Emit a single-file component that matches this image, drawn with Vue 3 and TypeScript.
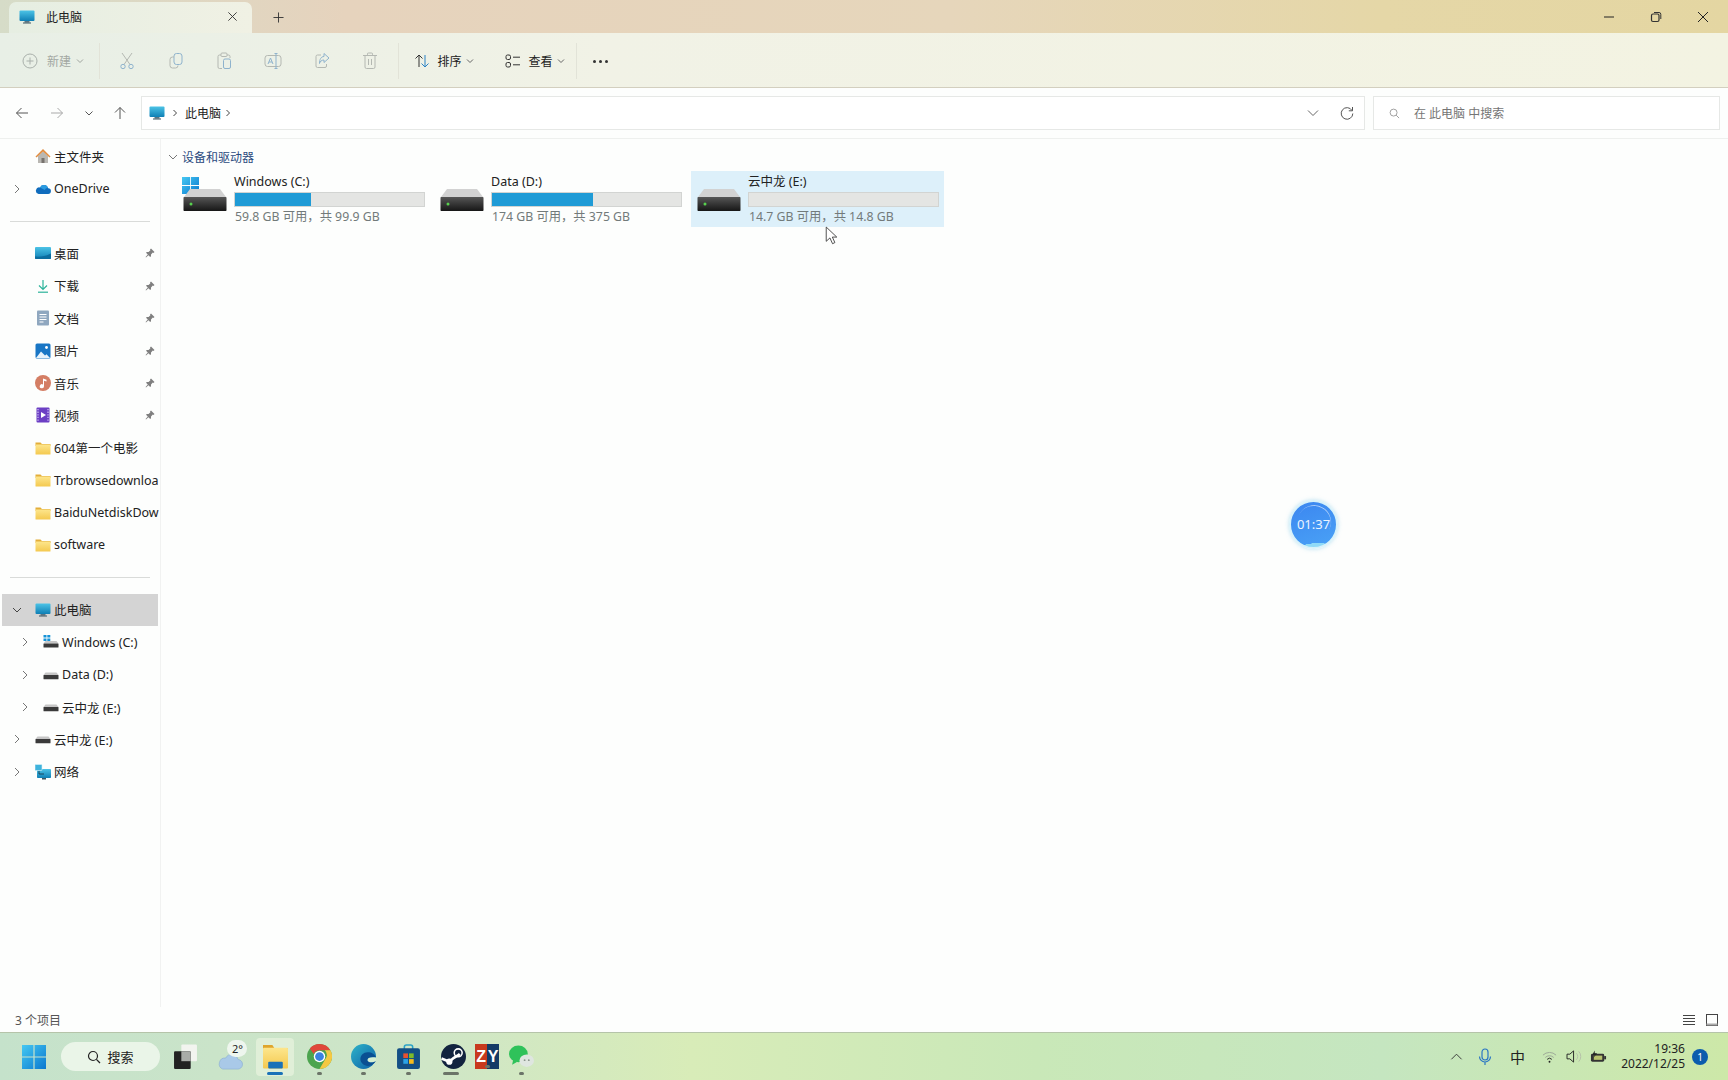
<script setup lang="ts">
interface NavItem {
  label: string;
  icon: string;
  arrow?: 'right' | 'down';
  pin?: boolean;
  sub?: boolean;
  active?: boolean;
}

const topItems: NavItem[] = [
  { label: '主文件夹', icon: 'home' },
  { label: 'OneDrive', icon: 'cloud', arrow: 'right' },
];

const quickItems: NavItem[] = [
  { label: '桌面', icon: 'desktop', pin: true },
  { label: '下载', icon: 'download', pin: true },
  { label: '文档', icon: 'doc', pin: true },
  { label: '图片', icon: 'picture', pin: true },
  { label: '音乐', icon: 'music', pin: true },
  { label: '视频', icon: 'video', pin: true },
  { label: '604第一个电影', icon: 'folder' },
  { label: 'Trbrowsedownloa', icon: 'folder' },
  { label: 'BaiduNetdiskDow', icon: 'folder' },
  { label: 'software', icon: 'folder' },
];

const pcItems: NavItem[] = [
  { label: '此电脑', icon: 'monitor', arrow: 'down', active: true },
  { label: 'Windows (C:)', icon: 'winsmall', arrow: 'right', sub: true },
  { label: 'Data (D:)', icon: 'drivesmall', arrow: 'right', sub: true },
  { label: '云中龙 (E:)', icon: 'drivesmall', arrow: 'right', sub: true },
  { label: '云中龙 (E:)', icon: 'drivesmall', arrow: 'right' },
  { label: '网络', icon: 'network', arrow: 'right' },
];

const navGroups = [topItems, quickItems, pcItems];

const drives = [
  { name: 'Windows (C:)', info: '59.8 GB 可用，共 99.9 GB', used: 40, system: true, selected: false },
  { name: 'Data (D:)', info: '174 GB 可用，共 375 GB', used: 53.6, system: false, selected: false },
  { name: '云中龙 (E:)', info: '14.7 GB 可用，共 14.8 GB', used: 0, system: false, selected: true },
];

const editTools = ['cut', 'copy', 'paste', 'rename', 'share', 'trash'];
const taskApps = ['chrome', 'edge', 'store', 'steam', 'zy', 'wechat'];
</script>

<template>
  <div class="screen">
    <svg class="sprite" width="0" height="0" aria-hidden="true">
      <defs>
        <linearGradient id="g-screen" x1="0" y1="0" x2="0" y2="1">
          <stop offset="0" stop-color="#4cc3e6" />
          <stop offset="1" stop-color="#0f7fb5" />
        </linearGradient>
        <linearGradient id="g-win" x1="0" y1="0" x2="1" y2="1">
          <stop offset="0" stop-color="#45c8f2" />
          <stop offset="1" stop-color="#0a78cf" />
        </linearGradient>
        <linearGradient id="g-drive" x1="0" y1="0" x2="0" y2="1">
          <stop offset="0" stop-color="#565656" />
          <stop offset="1" stop-color="#161616" />
        </linearGradient>
        <linearGradient id="g-folder" x1="0" y1="0" x2="0" y2="1">
          <stop offset="0" stop-color="#fde68d" />
          <stop offset="1" stop-color="#f4c94f" />
        </linearGradient>
        <linearGradient id="g-edge" x1="0" y1="0" x2="1" y2="1">
          <stop offset="0" stop-color="#2fb4c8" />
          <stop offset="1" stop-color="#0c5fa8" />
        </linearGradient>
      </defs>
      <symbol id="i-monitor" viewBox="0 0 16 16">
        <rect x="0.5" y="1.5" width="15" height="10.5" rx="1" fill="url(#g-screen)" />
        <rect x="5.5" y="12" width="5" height="1.6" fill="#5a7482" />
        <rect x="4" y="13.5" width="8" height="1" fill="#3d5560" />
      </symbol>
      <symbol id="i-home" viewBox="0 0 16 16">
        <path d="M3 8v7h10V8L8 3.5Z" fill="#b9b7b2" />
        <rect x="6.5" y="10" width="3" height="5" fill="#77736e" />
        <path d="M0.5 8.5 8 1l7.5 7.5-1 1L8 3.5 1.5 9.5Z" fill="#e08c3f" />
      </symbol>
      <symbol id="i-cloud" viewBox="0 0 16 16">
        <path d="M3.6 13h9.2a2.9 2.9 0 0 0 .4-5.8A4.4 4.4 0 0 0 5 6.4 3.3 3.3 0 0 0 3.6 13Z" fill="#0f6cbd" />
        <path d="M5 6.4A4.4 4.4 0 0 1 13.2 7.2 2.9 2.9 0 0 0 9.8 9Z" fill="#2b9be0" />
      </symbol>
      <symbol id="i-desktop" viewBox="0 0 16 16">
        <rect x="0" y="2" width="16" height="12" rx="1" fill="url(#g-screen)" />
        <path d="M0 11.5C6 12 11 11 16 8.5V13a1 1 0 0 1-1 1H1a1 1 0 0 1-1-1Z" fill="#0c6d9f" />
      </symbol>
      <symbol id="i-download" viewBox="0 0 16 16">
        <path d="M8 2v9M4 7.5 8 11.5l4-4" fill="none" stroke="#2bb39a" stroke-width="1.2" />
        <path d="M3 14.2h10" stroke="#2bb39a" stroke-width="1.2" />
      </symbol>
      <symbol id="i-doc" viewBox="0 0 16 16">
        <rect x="2" y="0.5" width="12" height="15" rx="1" fill="#8fa7bf" />
        <path d="M4.5 4.5h7M4.5 7h7M4.5 9.5h7M4.5 12h4" stroke="#fff" stroke-width="1" />
      </symbol>
      <symbol id="i-picture" viewBox="0 0 16 16">
        <rect x="0.5" y="0.5" width="15" height="15" rx="1.5" fill="#1976c5" />
        <circle cx="11.5" cy="4.5" r="1.4" fill="#fff" />
        <path d="M1 15 6 8.5l4 4 1.5-1.2L15 15Z" fill="#e6f2fb" />
      </symbol>
      <symbol id="i-music" viewBox="0 0 16 16">
        <circle cx="8" cy="8" r="8" fill="#d47e64" />
        <path d="M8 3.5 11.5 4.8V6.6L9 5.8V11.2A2.1 2.1 0 1 1 8 9.4Z" fill="#fff" />
      </symbol>
      <symbol id="i-video" viewBox="0 0 16 16">
        <rect x="1.5" y="0.5" width="13" height="15" rx="1" fill="#6c3fc4" />
        <path d="M6 5v6l5-3Z" fill="#fff" />
        <path d="M3 2v12M13 2v12" stroke="#c9b7f0" stroke-width="1.3" stroke-dasharray="1.3 1.3" />
      </symbol>
      <symbol id="i-folder" viewBox="0 0 16 16">
        <path d="M0.5 2.5h5l1.5 1.5h8.5v2H.5Z" fill="#e3ae3a" />
        <rect x="0.5" y="4.5" width="15" height="10" rx="0.6" fill="url(#g-folder)" />
      </symbol>
      <symbol id="i-drivesmall" viewBox="0 0 16 16">
        <path d="M2.5 5.5h11L15.5 8h-15Z" fill="#c6c6c6" />
        <rect x="0.5" y="8" width="15" height="4.2" rx="0.5" fill="#3a3a3a" />
      </symbol>
      <symbol id="i-winsmall" viewBox="0 0 16 16">
        <path d="M2.5 7h11L15.5 9.5h-15Z" fill="#c6c6c6" />
        <rect x="0.5" y="9.5" width="15" height="4" rx="0.5" fill="#3a3a3a" />
        <path d="M0.5 1h3v2.6h-3ZM4.3 1h3v2.6h-3ZM0.5 4.4h3V7h-3ZM4.3 4.4h3V7h-3Z" fill="#1593d8" />
      </symbol>
      <symbol id="i-network" viewBox="0 0 16 16">
        <rect x="2" y="5" width="14" height="9" rx="0.8" fill="url(#g-screen)" />
        <rect x="7" y="14" width="4" height="1.5" fill="#3d5560" />
        <rect x="0" y="0.5" width="7" height="6" rx="0.6" fill="#3fb3dc" stroke="#d9f1fa" stroke-width="0.6" />
        <path d="M4 7v3h5" fill="none" stroke="#123" stroke-width="0.7" />
      </symbol>
      <symbol id="i-pin" viewBox="0 0 10 10">
        <path d="M6 0.5 9.5 4 8.5 5 7.8 4.6 6 6.4V8.2L5.2 9 3.4 7.2 1 9.4.6 9l2.2-2.4L1 4.8 1.8 4h1.8l1.8-1.8L5 1.5Z" fill="#7f7f7f" />
      </symbol>
      <symbol id="i-winlogo" viewBox="0 0 16 16">
        <path d="M0 0h7.6v7.6H0ZM8.4 0H16v7.6H8.4ZM0 8.4h7.6V16H0ZM8.4 8.4H16V16H8.4Z" fill="url(#g-win)" />
      </symbol>
      <symbol id="i-bigdrive" viewBox="0 0 44 22">
        <path d="M7 0h30l6 8H1Z" fill="#d2d2d2" />
        <rect x="0.5" y="8" width="43" height="14" rx="0.8" fill="url(#g-drive)" />
        <circle cx="8" cy="15" r="1.5" fill="#58d14e" />
      </symbol>
      <symbol id="i-cut" viewBox="0 0 16 18">
        <path d="M3 1l8 11.5M13 1 5 12.5" fill="none" stroke="currentColor" />
        <circle cx="4" cy="14.5" r="2.2" fill="none" stroke="#8fb3cd" />
        <circle cx="12" cy="14.5" r="2.2" fill="none" stroke="#8fb3cd" />
      </symbol>
      <symbol id="i-copy" viewBox="0 0 16 18">
        <rect x="6" y="1.5" width="8" height="11" rx="2.5" fill="none" stroke="#8fb3cd" />
        <path d="M6 5H4.5A2.5 2.5 0 0 0 2 7.5v6A2.5 2.5 0 0 0 4.5 16h3A2.5 2.5 0 0 0 10 13.5" fill="none" stroke="currentColor" />
      </symbol>
      <symbol id="i-paste" viewBox="0 0 16 18">
        <path d="M5 3H3.5A1.5 1.5 0 0 0 2 4.500V15a1.500 1.500 0 0 0 1.500 1.500H6M11 3h1.500A1.500 1.500 0 0 1 14 4.500V6" fill="none" stroke="currentColor" />
        <rect x="5" y="1" width="6" height="3.500" rx="1" fill="none" stroke="currentColor" />
        <rect x="7.500" y="7" width="7" height="9.500" rx="1.500" fill="none" stroke="#8fb3cd" />
      </symbol>
      <symbol id="i-rename" viewBox="0 0 18 18">
        <rect x="1" y="3.500" width="16" height="11" rx="2.500" fill="none" stroke="currentColor" />
        <path d="M4 12 6.500 6 9 12M5 10h3M12 1.500v15M10.500 1.500h3M10.500 16.500h3" fill="none" stroke="#8fb3cd" />
      </symbol>
      <symbol id="i-share" viewBox="0 0 16 18">
        <path d="M7 3H3.500A1.500 1.500 0 0 0 2 4.500V14a1.500 1.500 0 0 0 1.500 1.500H11a1.500 1.500 0 0 0 1.500-1.500v-2" fill="none" stroke="currentColor" />
        <path d="M10 1.500 15 6l-5 4.500V8C7.500 8 6 9.500 5.500 11.500 5.500 7.500 7 4.500 10 4.500Z" fill="none" stroke="#8fb3cd" />
      </symbol>
      <symbol id="i-trash" viewBox="0 0 16 18">
        <path d="M1 3.500h14M5.500 3.500V2.200A1 1 0 0 1 6.500 1h3a1 1 0 0 1 1 1.200v1.300M3 3.500V15a1.500 1.500 0 0 0 1.500 1.500h7A1.500 1.500 0 0 0 13 15V3.500M6.500 7v6M9.500 7v6" fill="none" stroke="currentColor" />
      </symbol>
    </svg>

    <header class="titlebar">
      <div class="tab">
        <svg class="icon"><use href="#i-monitor" /></svg>
        <span class="tab-title">此电脑</span>
        <svg class="tab-close" viewBox="0 0 12 12"><path d="M1.500 1.500l9 9M10.500 1.500l-9 9" stroke="#333" fill="none" /></svg>
      </div>
      <svg class="tab-add" viewBox="0 0 12 12"><path d="M6 0.500v11M0.500 6h11" stroke="#333" fill="none" /></svg>
      <div class="window-btns">
        <div class="win-btn"><svg viewBox="0 0 12 12"><path d="M1 6h10" stroke="#222" stroke-width="1" /></svg></div>
        <div class="win-btn"><svg viewBox="0 0 12 12"><rect x="1.500" y="3" width="7.500" height="7.500" rx="1.500" fill="none" stroke="#333" stroke-width="1.200" /><path d="M4 1.500h5A1.800 1.800 0 0 1 10.800 3.300V8" fill="none" stroke="#333" /></svg></div>
        <div class="win-btn"><svg viewBox="0 0 12 12"><path d="M1 1l10 10M11 1 1 11" stroke="#222" fill="none" /></svg></div>
      </div>
    </header>

    <div class="toolbar">
      <div class="tool tool-new">
        <svg class="tool-icon plus" viewBox="0 0 16 16"><circle cx="8" cy="8" r="7" fill="none" stroke="#a9b0ab" /><path d="M8 4.500v7M4.500 8h7" stroke="#a9b0ab" fill="none" /></svg>
        <span class="muted">新建</span>
        <svg class="caret" viewBox="0 0 8 8"><path d="M1 2.500 4 5.500 7 2.500" fill="none" stroke="#a0a59f" /></svg>
      </div>
      <i class="tool-sep first"></i>
      <div v-for="tool in editTools" :key="tool" class="tool-edit">
        <svg class="edit-icon"><use :href="`#i-${tool}`" /></svg>
      </div>
      <i class="tool-sep"></i>
      <div class="tool tool-sort">
        <svg class="tool-icon" viewBox="0 0 16 16"><path d="M5 14V2M1.500 5.500 5 2l3.500 3.500" fill="none" stroke="#333" /><path d="M11 2v12M7.500 10.500 11 14l3.500-3.500" fill="none" stroke="#2a82c4" /></svg>
        <span>排序</span>
        <svg class="caret" viewBox="0 0 8 8"><path d="M1 2.500 4 5.500 7 2.500" fill="none" stroke="#666" /></svg>
      </div>
      <div class="tool tool-view">
        <svg class="tool-icon" viewBox="0 0 16 16"><rect x="1" y="2" width="4.500" height="4.500" rx="1.500" fill="none" stroke="#333" /><rect x="1" y="9.500" width="4.500" height="4.500" rx="1.500" fill="none" stroke="#333" /><path d="M8 4.200h7M8 11.800h7" stroke="#333" /></svg>
        <span>查看</span>
        <svg class="caret" viewBox="0 0 8 8"><path d="M1 2.500 4 5.500 7 2.500" fill="none" stroke="#666" /></svg>
      </div>
      <i class="tool-sep"></i>
      <div class="tool-more"><b></b><b></b><b></b></div>
    </div>

    <div class="addressrow">
      <div class="nav-btns">
        <svg viewBox="0 0 14 14"><path d="M13 7H1.500M6.500 2 1.500 7l5 5" fill="none" stroke="#555" /></svg>
        <svg viewBox="0 0 14 14"><path d="M1 7h11.500M7.500 2l5 5-5 5" fill="none" stroke="#a9a9a9" /></svg>
        <svg viewBox="0 0 14 14"><path d="M3.500 5.500 7 9l3.500-3.500" fill="none" stroke="#555" /></svg>
        <svg viewBox="0 0 14 14"><path d="M7 13V1.500M2 6.500l5-5 5 5" fill="none" stroke="#555" /></svg>
      </div>
      <div class="addressbox">
        <svg class="icon"><use href="#i-monitor" /></svg>
        <svg class="crumb" viewBox="0 0 8 8"><path d="M2.500 1 5.500 4 2.500 7" fill="none" stroke="#444" /></svg>
        <span class="crumb-text">此电脑</span>
        <svg class="crumb" viewBox="0 0 8 8"><path d="M2.500 1 5.500 4 2.500 7" fill="none" stroke="#444" /></svg>
        <span class="spacer"></span>
        <svg class="addr-down" viewBox="0 0 12 12"><path d="M1 3.500 6 8.500l5-5" fill="none" stroke="#666" /></svg>
        <svg class="addr-refresh" viewBox="0 0 14 14"><path d="M12 4.500A5.800 5.800 0 1 0 12.800 7.500M12.500 1v3.800H8.800" fill="none" stroke="#555" /></svg>
      </div>
      <div class="searchbox">
        <svg viewBox="0 0 12 12"><circle cx="5" cy="5" r="3.800" fill="none" stroke="#999" /><path d="M7.800 7.800 11 11" stroke="#999" fill="none" /></svg>
        <span>在 此电脑 中搜索</span>
      </div>
    </div>

    <div class="body">
      <nav class="sidebar">
        <template v-for="(group, g) in navGroups" :key="g">
          <div v-if="g > 0" class="nav-divider"></div>
          <div
            v-for="item in group"
            :key="item.label + item.icon + item.sub"
            class="nav-row"
            :class="{ active: item.active, sub: item.sub }"
          >
            <span class="nav-arrow">
              <svg v-if="item.arrow === 'right'" viewBox="0 0 10 10"><path d="M3 1 7 5 3 9" fill="none" stroke="#777" /></svg>
              <svg v-else-if="item.arrow === 'down'" viewBox="0 0 10 10"><path d="M1 3 5 7 9 3" fill="none" stroke="#444" /></svg>
            </span>
            <svg class="icon"><use :href="`#i-${item.icon}`" /></svg>
            <span class="nav-label">{{ item.label }}</span>
            <svg v-if="item.pin" class="pin"><use href="#i-pin" /></svg>
          </div>
        </template>
      </nav>

      <main class="content">
        <div class="group-head">
          <svg viewBox="0 0 10 10"><path d="M1 3 5 7 9 3" fill="none" stroke="#777" /></svg>
          <span>设备和驱动器</span>
        </div>
        <div class="drives">
          <div v-for="d in drives" :key="d.name" class="drive" :class="{ selected: d.selected }">
            <div class="drive-icon">
              <svg v-if="d.system" class="drive-win"><use href="#i-winlogo" /></svg>
              <svg class="drive-disk"><use href="#i-bigdrive" /></svg>
            </div>
            <div class="drive-meta">
              <div class="drive-name">{{ d.name }}</div>
              <div class="drive-bar"><div class="drive-fill" :style="{ width: d.used + '%' }"></div></div>
              <div class="drive-info">{{ d.info }}</div>
            </div>
          </div>
        </div>
      </main>
    </div>

    <footer class="statusbar">
      <span>3 个项目</span>
      <span class="spacer"></span>
      <svg viewBox="0 0 14 14"><path d="M1 2.500h12M1 5.500h12M1 8.500h12M1 11.500h12" stroke="#444" fill="none" /></svg>
      <svg viewBox="0 0 14 14"><rect x="1.500" y="1.500" width="11" height="11" fill="none" stroke="#444" /><rect x="1.500" y="10.500" width="11" height="2" fill="#aaa" /></svg>
    </footer>

    <div class="taskbar">
      <svg class="task-win"><use href="#i-winlogo" /></svg>
      <div class="task-search">
        <svg viewBox="0 0 14 14"><circle cx="6" cy="6" r="4.500" fill="none" stroke="#222" stroke-width="1.200" /><path d="M9.400 9.400 13 13" stroke="#222" stroke-width="1.300" fill="none" /></svg>
        <span>搜索</span>
      </div>
      <div class="task-slot taskview">
        <svg class="task-icon" viewBox="0 0 24 24"><rect x="8" y="0.500" width="15" height="16" rx="1" fill="#f2f4ef" /><rect x="1" y="7" width="16" height="17" rx="1" fill="#222" /><rect x="8" y="7" width="9" height="9.500" fill="#a9aca8" /></svg>
      </div>
      <div class="task-slot weather">
        <svg class="task-icon" viewBox="0 0 26 24"><path d="M5 22h15a5 5 0 0 0 1-10 7 7 0 0 0-13-1.500A6 6 0 0 0 5 22Z" fill="#a9c9e8" stroke="#87abd1" stroke-width="0.600" /></svg>
        <span class="weather-temp">2°</span>
      </div>
      <div class="task-slot explorer">
        <svg class="task-icon" viewBox="0 0 24 24"><path d="M0 1h9l2 3h13v3H0Z" fill="#dfa52c" /><rect y="3.500" width="24" height="20" rx="1" fill="url(#g-folder)" /><rect x="5" y="17" width="14" height="6.500" rx="1" fill="#1a72b8" /></svg>
        <i class="dot open"></i>
      </div>
      <div v-for="app in taskApps" :key="app" class="task-slot" :class="app">
        <svg v-if="app === 'chrome'" class="task-icon" viewBox="0 0 24 24">
          <circle cx="12" cy="12" r="12" fill="#4ca44f" />
          <path d="M12 0a12 12 0 0 1 10.400 6H12a6 6 0 0 0-5.500 3.600L2.700 4.400A12 12 0 0 1 12 0Z" fill="#e0463a" />
          <path d="M22.400 6A12 12 0 0 1 12 24l5.200-9A6 6 0 0 0 17 6Z" fill="#f5c842" />
          <circle cx="12" cy="12" r="5.500" fill="#fff" /><circle cx="12" cy="12" r="4.200" fill="#3b82e0" />
        </svg>
        <svg v-else-if="app === 'edge'" class="task-icon" viewBox="0 0 24 24">
          <circle cx="12" cy="12" r="12" fill="url(#g-edge)" />
          <path d="M24 13c-1-3-4-5-8-5-4 0-7 3-7 6.500 0 4 4 7 8 6.500 3-.5 5.500-2 7-5-2 1.500-5 2-7 1-1.500-.7-1.500-2.500 0-3.500 2-1.200 5-1 7-.5Z" fill="#0a4f92" />
          <path d="M24 13c-2-.5-5-.7-7 .5-1.500 1-1.500 2.800 0 3.500 2 1 5 .5 7-1Z" fill="#d6efd2" />
        </svg>
        <svg v-else-if="app === 'store'" class="task-icon" viewBox="0 0 24 24">
          <path d="M8 5V3a2 2 0 0 1 2-2h4a2 2 0 0 1 2 2v2" fill="none" stroke="#2ba3c7" stroke-width="1.500" />
          <rect x="1" y="4" width="22" height="20" rx="2" fill="#134f85" />
          <rect x="7" y="9" width="4.500" height="4.500" fill="#e9502f" /><rect x="12.500" y="9" width="4.500" height="4.500" fill="#7ebb2b" />
          <rect x="7" y="14.500" width="4.500" height="4.500" fill="#2ba3e6" /><rect x="12.500" y="14.500" width="4.500" height="4.500" fill="#f7bb1c" />
        </svg>
        <svg v-else-if="app === 'steam'" class="task-icon" viewBox="0 0 24 24">
          <circle cx="12" cy="12" r="12" fill="#12233f" />
          <path d="M0.500 14 8 17l4-3.500 5-3 1-1" fill="none" stroke="#fff" stroke-width="2.500" />
          <circle cx="16.500" cy="8.500" r="3.800" fill="none" stroke="#fff" stroke-width="1.500" />
          <circle cx="8" cy="17" r="3" fill="#fff" />
        </svg>
        <div v-else-if="app === 'zy'" class="zy"><span class="zy-z">Z</span><span class="zy-y">Y</span></div>
        <svg v-else class="task-icon" viewBox="0 0 24 24">
          <ellipse cx="9" cy="9.500" rx="9" ry="8" fill="#2fc25a" />
          <path d="M4 15 3 20l5-3Z" fill="#2fc25a" />
          <ellipse cx="17" cy="16" rx="7" ry="6" fill="#dfe6e0" />
          <circle cx="15" cy="15.500" r="0.900" fill="#8b958d" /><circle cx="19" cy="15.500" r="0.900" fill="#8b958d" />
        </svg>
        <i class="dot" :class="{ wide: app === 'steam' }"></i>
      </div>

      <span class="spacer"></span>

      <div class="tray">
        <svg class="tray-chevron" viewBox="0 0 14 14"><path d="M1.500 10 7 4.500l5.500 5.500" fill="none" stroke="#333" /></svg>
        <svg class="tray-mic" viewBox="0 0 14 18"><rect x="4" y="1" width="6" height="11" rx="3" fill="none" stroke="#2a76c4" stroke-width="1.200" /><path d="M1.500 8.500a5.500 5.500 0 0 0 11 0M7 14v3" fill="none" stroke="#2a76c4" stroke-width="1.200" /></svg>
        <span class="tray-ime">中</span>
        <svg class="tray-wifi" viewBox="0 0 16 14"><path d="M1 5a10 10 0 0 1 14 0M3.500 7.500a6.500 6.500 0 0 1 9 0" fill="none" stroke="#9aa595" /><path d="M5.500 9.500a3.500 3.500 0 0 1 5 0" fill="none" stroke="#222" /><circle cx="8" cy="12" r="1" fill="#222" /></svg>
        <svg class="tray-vol" viewBox="0 0 18 16"><path d="M1 5.500h3L8 2v12L4 10.500H1Z" fill="none" stroke="#222" /><path d="M11 4.500a5 5 0 0 1 0 7M13.500 2.500a8 8 0 0 1 0 11" fill="none" stroke="#b4bfa9" /></svg>
        <svg class="tray-bat" viewBox="0 0 18 14"><rect x="1" y="3.500" width="14" height="8.500" rx="1.500" fill="#333" /><rect x="15" y="6" width="2" height="3.500" fill="#333" /><rect x="4" y="5.500" width="9" height="4.500" fill="#b7c26d" /><path d="M5 0 2.500 4.500h2.500L3.500 8 7.500 3H5Z" fill="#222" /></svg>
        <div class="clock"><div>19:36</div><div>2022/12/25</div></div>
        <span class="badge">1</span>
      </div>
    </div>

    <div class="timer">01:37</div>

    <svg class="cursor" viewBox="0 0 12 18"><path d="M1 1v13.500L4.500 11.300 7 16.800 9.200 15.700 6.800 10.500H11Z" fill="#fff" stroke="#333" stroke-width="0.800" /></svg>
  </div>
</template>

<style scoped>
.screen {
  position: relative;
  width: 1728px;
  height: 1080px;
  overflow: hidden;
  display: flex;
  flex-direction: column;
  background: #fdfefd;
  color: #222;
  font-family: "Noto Sans", "Noto Sans CJK SC", sans-serif;
  font-size: 12px;
}
.sprite {
  position: absolute;
}
.spacer {
  flex: 1;
}
.icon {
  width: 16px;
  height: 16px;
  flex: none;
}

/* title bar */
.titlebar {
  height: 33px;
  flex: none;
  display: flex;
  align-items: flex-end;
  padding-left: 9px;
  background: linear-gradient(90deg, #d6dcc8 0, #e6d3bd 20%, #e6d6bb 55%, #e5d7a7 80%, #e4d6a2 100%);
}
.tab {
  width: 243px;
  height: 31px;
  display: flex;
  align-items: center;
  padding: 0 14px 2px 10px;
  box-sizing: border-box;
  border-radius: 7px 7px 0 0;
  background: linear-gradient(90deg, #e6eee2, #f0f1e4);
}
.tab-title {
  flex: 1;
  margin-left: 11px;
}
.tab-close {
  width: 11px;
  height: 11px;
}
.tab-add {
  width: 11px;
  height: 11px;
  margin: 0 0 10px 21px;
}
.window-btns {
  margin-left: auto;
  margin-right: 2px;
  align-self: stretch;
  display: flex;
  align-items: center;
}
.win-btn {
  width: 47px;
  display: flex;
  justify-content: center;
}
.win-btn svg {
  width: 12px;
  height: 12px;
}

/* toolbar */
.toolbar {
  height: 55px;
  flex: none;
  display: flex;
  align-items: center;
  padding: 2px 0 0 22px;
  box-sizing: border-box;
  border-bottom: 1px solid #d3cfbf;
  background: linear-gradient(90deg, #e8efe6 0, #f1f2e6 35%, #f3f3e2 100%);
}
.tool {
  display: flex;
  align-items: center;
  gap: 8px;
}
.tool-new {
  width: 77px;
  gap: 9px;
}
.tool-icon {
  width: 16px;
  height: 16px;
}
.caret {
  width: 8px;
  height: 8px;
  margin-left: -4px;
}
.muted {
  color: #a3a8a3;
}
.tool-sep {
  width: 1px;
  height: 36px;
  background: #e2e3d8;
  margin: 0 0 0 3px;
}
.tool-sep.first {
  margin-left: 0;
}
.tool-edit {
  width: 48.6px;
  display: flex;
  justify-content: center;
  color: #b4b8b2;
}
.tool-sep.first + .tool-edit {
  margin-left: 3px;
}
.edit-icon {
  width: 18px;
  height: 18px;
}
.tool-sort {
  width: 91px;
  margin-left: 15px;
}
.tool-view {
  width: 68px;
  margin-left: 0;
}
.tool-more {
  margin-left: 16px;
  display: flex;
  gap: 3px;
}
.tool-more b {
  width: 3px;
  height: 3px;
  border-radius: 50%;
  background: #333;
}

/* address row */
.addressrow {
  height: 51px;
  flex: none;
  display: flex;
  align-items: center;
  background: #fdfefd;
  border-bottom: 1px solid #eef0ee;
  box-sizing: border-box;
}
.nav-btns {
  width: 141px;
  flex: none;
  display: flex;
  align-items: center;
  padding-left: 15px;
  box-sizing: border-box;
  gap: 21px;
}
.nav-btns svg {
  width: 14px;
  height: 14px;
}
.nav-btns svg:nth-child(3) {
  margin-left: -3px;
}
.nav-btns svg:nth-child(4) {
  margin-left: -4px;
}
.addressbox {
  width: 1224px;
  height: 34px;
  flex: none;
  display: flex;
  align-items: center;
  box-sizing: border-box;
  padding: 0 10px 0 7px;
  border: 1px solid #e6e8e6;
  background: #fff;
}
.crumb {
  width: 8px;
  height: 8px;
  margin: 0 6px 0 6px;
}
.crumb-text + .crumb {
  margin-left: 3px;
}
.addr-down {
  width: 12px;
  height: 12px;
  margin-right: 21px;
}
.addr-refresh {
  width: 14px;
  height: 14px;
}
.searchbox {
  width: 347px;
  height: 34px;
  margin-left: 8px;
  flex: none;
  display: flex;
  align-items: center;
  box-sizing: border-box;
  padding-left: 15px;
  gap: 14px;
  color: #757575;
  border: 1px solid #e6e8e6;
  background: #fff;
}
.searchbox svg {
  width: 11px;
  height: 11px;
}

/* body */
.body {
  flex: 1;
  min-height: 0;
  display: flex;
}
.sidebar {
  width: 161px;
  flex: none;
  box-sizing: border-box;
  padding: 1px 2px 0;
  border-right: 1px solid #f1f2f1;
}
.nav-row {
  height: 32.4px;
  display: flex;
  align-items: center;
  color: #222;
  white-space: nowrap;
}
.nav-row.active {
  background: #d4d4d4;
}
.nav-arrow {
  width: 33px;
  flex: none;
  display: flex;
  padding-left: 10px;
  box-sizing: border-box;
}
.nav-arrow svg {
  width: 10px;
  height: 10px;
}
.nav-row.sub .nav-arrow {
  width: 41px;
  padding-left: 18px;
}
.nav-label {
  flex: 1;
  min-width: 0;
  margin-left: 3px;
  font-size: 12.5px;
}
.pin {
  width: 10px;
  height: 10px;
  flex: none;
  margin-right: 3px;
}
.nav-divider {
  height: 1px;
  margin: 16px 8px 15.500px;
  background: #d9dbd9;
}
.content {
  flex: 1;
  padding: 5px 0 0 16px;
}
.group-head {
  height: 26px;
  margin-left: -9px;
  display: flex;
  align-items: center;
  gap: 4px;
  color: #2b4a7d;
}
.group-head svg {
  width: 10px;
  height: 10px;
}
.drives {
  display: flex;
  gap: 4px;
  margin-top: 1px;
}
.drive {
  width: 253px;
  height: 56px;
  display: flex;
  box-sizing: border-box;
  padding: 3px 5px 0 6px;
}
.drive.selected {
  background: #ddf0fa;
}
.drive-icon {
  position: relative;
  width: 44px;
  height: 50px;
  flex: none;
}
.drive-disk {
  position: absolute;
  left: 0;
  top: 15px;
  width: 44px;
  height: 22px;
}
.drive-win {
  position: absolute;
  left: -1px;
  top: 3px;
  width: 17px;
  height: 17px;
}
.drive-meta {
  margin-left: 7px;
  flex: 1;
}
.drive-name {
  height: 16px;
  line-height: 16px;
  font-size: 12.500px;
}
.drive-bar {
  height: 15px;
  margin-top: 2px;
  box-sizing: border-box;
  border: 1px solid #d2d4d2;
  background: #e4e5e3;
  width: 191px;
}
.drive-fill {
  height: 100%;
  background: #1f9bd6;
}
.drive-info {
  padding-left: 1px;
  color: #727a7a;
  font-size: 12.300px;
  white-space: nowrap;
}
.statusbar {
  height: 25px;
  flex: none;
  display: flex;
  align-items: center;
  padding: 0 9px 0 15px;
  gap: 9px;
  color: #555;
}
.statusbar svg {
  width: 14px;
  height: 14px;
}

/* taskbar */
.taskbar {
  height: 48px;
  flex: none;
  display: flex;
  align-items: center;
  box-sizing: border-box;
  padding-left: 22px;
  border-top: 1px solid #b5c4a9;
  background: linear-gradient(90deg, #c5e2cb 0, #cfe6c7 25%, #d8ecb8 40%, #c9e8b8 60%, #c5e6c0 80%, #cde8a8 100%);
}
.task-win {
  width: 24px;
  height: 24px;
  flex: none;
}
.task-search {
  width: 99px;
  height: 29px;
  margin-left: 15px;
  flex: none;
  display: flex;
  align-items: center;
  justify-content: center;
  gap: 6px;
  font-size: 13px;
  border-radius: 15px;
  background: #eaf5e8;
}
.task-search svg {
  width: 14px;
  height: 14px;
}
.task-slot {
  position: relative;
  width: 44.200px;
  height: 38px;
  flex: none;
  display: flex;
  align-items: center;
  justify-content: center;
}
.taskview {
  margin-left: 3px;
}
.weather {
  margin-left: 1px;
}
.store {
  margin-left: 1px;
}
.task-icon {
  width: 25px;
  height: 25px;
}
.weather .task-icon {
  margin-top: 6px;
}
.weather-temp {
  position: absolute;
  top: 2px;
  right: 5px;
  width: 20px;
  height: 17px;
  line-height: 17px;
  border-radius: 9px;
  text-align: center;
  font-size: 11px;
  background: #eef6ee;
}
.explorer {
  width: 38px;
  margin: 0 3px 0 4px;
  border-radius: 4px;
  background: #e0efd8;
}
.dot {
  position: absolute;
  left: 50%;
  bottom: 1px;
  width: 5px;
  height: 3px;
  margin-left: -2.500px;
  border-radius: 2px;
  background: #6b7468;
}
.dot.open {
  width: 16px;
  margin-left: -8px;
  background: #1a72b8;
}
.dot.wide {
  width: 16px;
  margin-left: -10px;
}
.zy {
  width: 24px;
  height: 25px;
  display: flex;
  font-family: "Liberation Sans", sans-serif;
  font-weight: 700;
  font-size: 16px;
  line-height: 25px;
  text-align: center;
  color: #fff;
}
.zy-z {
  width: 12px;
  background: #c8391e;
}
.zy-y {
  width: 12px;
  background: #143a66;
}
.tray {
  display: flex;
  align-items: center;
  height: 100%;
}
.tray-chevron {
  width: 13px;
  height: 13px;
  margin-right: 15px;
}
.tray-mic {
  width: 14px;
  height: 18px;
  margin-right: 18px;
}
.tray-ime {
  font-size: 15px;
  margin-right: 17px;
}
.tray-wifi {
  width: 15px;
  height: 14px;
  margin-right: 9px;
}
.tray-vol {
  width: 17px;
  height: 15px;
  margin-right: 7px;
}
.tray-bat {
  width: 17px;
  height: 14px;
}
.clock {
  width: 70px;
  margin-left: 8px;
  text-align: right;
  font-size: 12px;
  line-height: 14.500px;
}
.badge {
  width: 16px;
  height: 16px;
  margin: 0 20px 0 7px;
  border-radius: 50%;
  background: #0b5cad;
  color: #fff;
  font-size: 10px;
  line-height: 16px;
  text-align: center;
}

/* overlays */
.timer {
  position: absolute;
  left: 1289px;
  top: 500px;
  width: 45px;
  height: 45px;
  border: 2.500px solid #d8f2fa;
  border-radius: 50%;
  text-align: center;
  line-height: 44px;
  font-size: 13px;
  color: #eaf4ff;
  background: radial-gradient(ellipse 32px 10px at 60% 105%, #8fdaf7 60%, transparent 62%), linear-gradient(160deg, #3b86f0, #4aa2f6);
  box-shadow: 0 0 4px rgba(140, 205, 235, 0.6);
}
.timer::after {
  content: "";
  position: absolute;
  left: 6px;
  top: 3px;
  width: 34px;
  height: 34px;
  border-radius: 50%;
  border-top: 1px solid rgba(255, 255, 255, 0.55);
  transform: rotate(28deg);
}
.cursor {
  position: absolute;
  left: 825px;
  top: 226px;
  width: 13px;
  height: 19px;
}
</style>
